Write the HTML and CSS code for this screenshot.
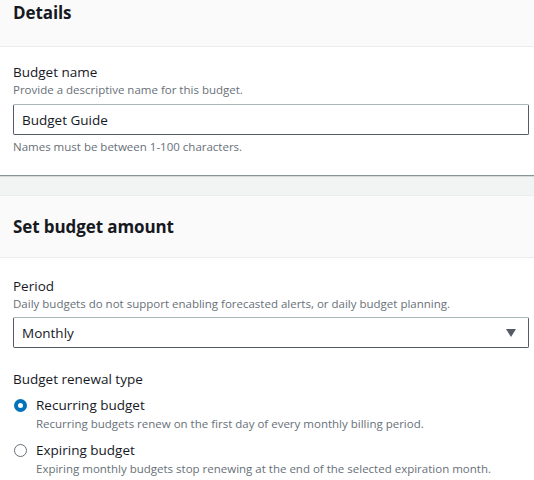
FILE: index.html
```html
<!DOCTYPE html>
<html>
<head>
<meta charset="utf-8">
<link rel="stylesheet" href="styles.css">
</head>
<body>
<section class="panel first">
  <div class="panel-header"><h2>Details</h2></div>
  <div class="panel-body">
    <div class="field">
      <div class="label">Budget name</div>
      <div class="desc">Provide a descriptive name for this budget.</div>
      <div class="input">Budget Guide</div>
      <div class="hint">Names must be between 1-100 characters.</div>
    </div>
  </div>
</section>
<div class="gap"></div>
<section class="panel second">
  <div class="panel-header tall"><h2>Set budget amount</h2></div>
  <div class="panel-body">
    <div class="field">
      <div class="label">Period</div>
      <div class="desc">Daily budgets do not support enabling forecasted alerts, or daily budget planning.</div>
      <div class="input select"><span>Monthly</span>
        <svg class="caret" width="10" height="8" viewBox="0 0 10 8"><path d="M0 0H10L5 8Z" fill="#545b64"/></svg>
      </div>
    </div>
    <div class="field renewal">
      <div class="label">Budget renewal type</div>
      <div class="radio">
        <span class="dot checked"></span>
        <div class="radio-text">
          <div class="radio-label">Recurring budget</div>
          <div class="desc">Recurring budgets renew on the first day of every monthly billing period.</div>
        </div>
      </div>
      <div class="radio">
        <span class="dot"></span>
        <div class="radio-text">
          <div class="radio-label">Expiring budget</div>
          <div class="desc">Expiring monthly budgets stop renewing at the end of the selected expiration month.</div>
        </div>
      </div>
    </div>
  </div>
</section>
</body>
</html>
```
FILE: styles.css
```css
html, body {
  margin: 0;
  padding: 0;
  background: #ffffff;
}
body {
  font-family: "Open Sans", "Noto Sans", sans-serif;
  color: #16191f;
  width: 534px;
  overflow: hidden;
}
.panel-header {
  background: #fafafa;
  border-bottom: 1px solid #eaeded;
  height: 46px;
  box-sizing: border-box;
  padding: 0 13px;
  display: flex;
  align-items: center;
}
.first .panel-header {
  height: 47px;
  align-items: flex-start;
  padding-top: 1px;
}
.panel-header.tall {
  height: 62px;
  padding-top: 0;
}
h2 {
  margin: 0;
  font-size: 17px;
  font-weight: 700;
  line-height: 24px;
  letter-spacing: -0.1px;
}
.panel-body {
  padding: 15px 5px 0 13px;
}
.first .panel-body {
  height: 129px;
  box-sizing: border-box;
  border-bottom: 1px solid #879596;
}
.second .panel-body {
  padding-top: 18px;
}
.label, .radio-label {
  font-size: 13.5px;
  line-height: 20px;
}
.desc, .hint {
  font-size: 11.5px;
  line-height: 16px;
  color: #687078;
}
.input {
  margin-top: 6px;
  height: 31px;
  box-sizing: border-box;
  border: 1px solid #545b64;
  border-top-color: #aab7b8;
  border-radius: 2px;
  padding: 0 8px;
  font-size: 13.5px;
  display: flex;
  align-items: center;
}
.select {
  margin-top: 5px;
  justify-content: space-between;
  padding-right: 12px;
}
.hint {
  margin-top: 4px;
}
.gap {
  height: 18px;
  background: #f2f3f3;
  border-top: 1px solid #d5dbdb;
  border-bottom: 1px solid #eaeded;
}
.renewal {
  margin-top: 21px;
}
.radio {
  display: flex;
  align-items: flex-start;
  margin-top: 6px;
}
.radio + .radio {
  margin-top: 8px;
}
.dot {
  width: 13px;
  height: 13px;
  box-sizing: border-box;
  border-radius: 50%;
  border: 1.5px solid #687078;
  margin: 4px 9px 0 1px;
  flex: none;
  background: #fff;
}
.dot.checked {
  border: 4px solid #0073bb;
}
.radio-text .desc {
  margin-top: 1px;
}
```
